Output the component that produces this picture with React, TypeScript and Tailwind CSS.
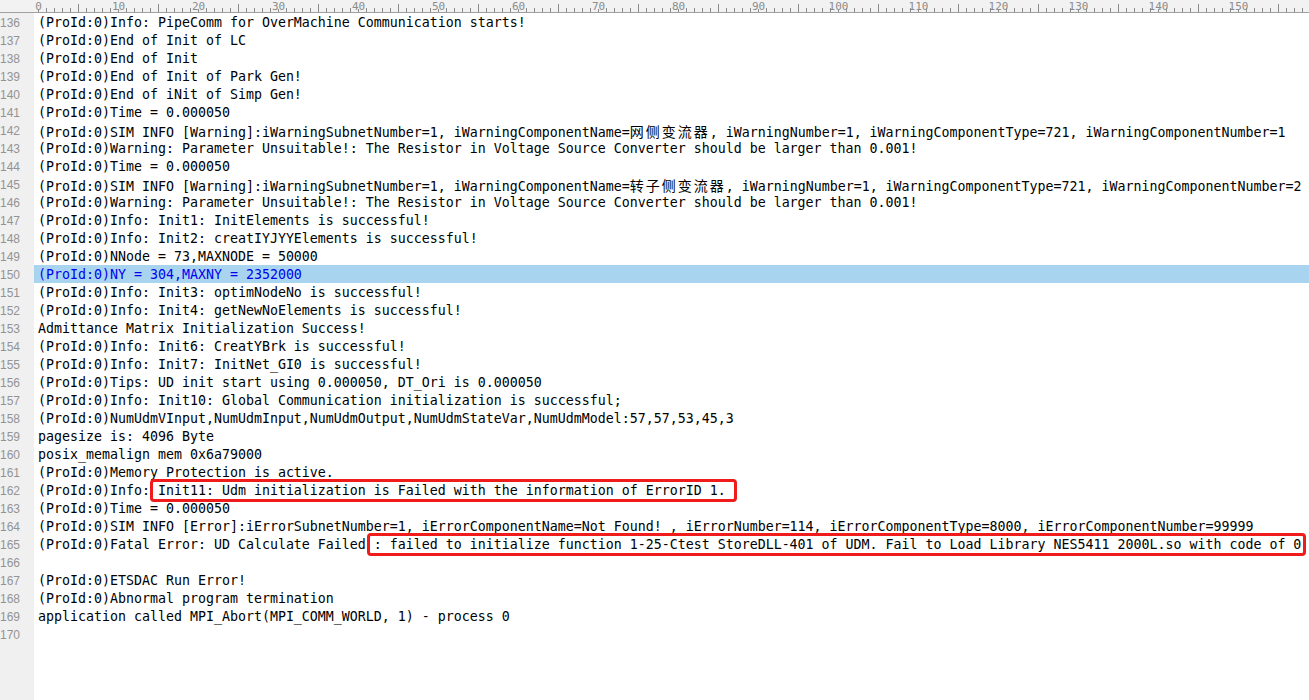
const mono = "font-['DejaVu_Sans_Mono','Liberation_Mono',monospace]";
const cjk = "font-['Noto_Sans_CJK_SC',sans-serif] text-[14px] tracking-[2px]";

function Cn({ children }: { children: string }) {
  return <span className={cjk}>{children}</span>;
}

const lines: React.ReactNode[] = [
  "(ProId:0)Info: PipeComm for OverMachine Communication starts!",
  "(ProId:0)End of Init of LC",
  "(ProId:0)End of Init",
  "(ProId:0)End of Init of Park Gen!",
  "(ProId:0)End of iNit of Simp Gen!",
  "(ProId:0)Time = 0.000050",
  <>
    (ProId:0)SIM INFO [Warning]:iWarningSubnetNumber=1, iWarningComponentName=<Cn>网侧变流器</Cn>, iWarningNumber=1,
    iWarningComponentType=721, iWarningComponentNumber=1
  </>,
  "(ProId:0)Warning: Parameter Unsuitable!: The Resistor in Voltage Source Converter should be larger than 0.001!",
  "(ProId:0)Time = 0.000050",
  <>
    (ProId:0)SIM INFO [Warning]:iWarningSubnetNumber=1, iWarningComponentName=<Cn>转子侧变流器</Cn>, iWarningNumber=1,
    iWarningComponentType=721, iWarningComponentNumber=2
  </>,
  "(ProId:0)Warning: Parameter Unsuitable!: The Resistor in Voltage Source Converter should be larger than 0.001!",
  "(ProId:0)Info: Init1: InitElements is successful!",
  "(ProId:0)Info: Init2: creatIYJYYElements is successful!",
  "(ProId:0)NNode = 73,MAXNODE = 50000",
  "(ProId:0)NY = 304,MAXNY = 2352000",
  "(ProId:0)Info: Init3: optimNodeNo is successful!",
  "(ProId:0)Info: Init4: getNewNoElements is successful!",
  "Admittance Matrix Initialization Success!",
  "(ProId:0)Info: Init6: CreatYBrk is successful!",
  "(ProId:0)Info: Init7: InitNet_GI0 is successful!",
  "(ProId:0)Tips: UD init start using 0.000050, DT_Ori is 0.000050",
  "(ProId:0)Info: Init10: Global Communication initialization is successful;",
  "(ProId:0)NumUdmVInput,NumUdmInput,NumUdmOutput,NumUdmStateVar,NumUdmModel:57,57,53,45,3",
  "pagesize is: 4096 Byte",
  "posix_memalign mem 0x6a79000",
  "(ProId:0)Memory Protection is active.",
  "(ProId:0)Info: Init11: Udm initialization is Failed with the information of ErrorID 1.",
  "(ProId:0)Time = 0.000050",
  "(ProId:0)SIM INFO [Error]:iErrorSubnetNumber=1, iErrorComponentName=Not Found! , iErrorNumber=114, iErrorComponentType=8000, iErrorComponentNumber=99999",
  "(ProId:0)Fatal Error: UD Calculate Failed : failed to initialize function 1-25-Ctest StoreDLL-401 of UDM. Fail to Load Library NES5411 2000L.so with code of 0",
  "",
  "(ProId:0)ETSDAC Run Error!",
  "(ProId:0)Abnormal program termination",
  "application called MPI_Abort(MPI_COMM_WORLD, 1) - process 0",
  "",
];

function Ruler() {
  const ticks = [];
  for (let k = 0; k < 160; k++) {
    const x = 38 + k * 8 + 0.5;
    if (k % 10 === 0) {
      ticks.push(
        <g key={k}>
          <line x1={x} y1={9} x2={x} y2={12} stroke="#8c8c8c" />
          <text x={x} y={10} textAnchor="middle" fontSize="11" fill="#8c8c8c" fontFamily="DejaVu Sans Mono, monospace">
            {k}
          </text>
        </g>
      );
    } else {
      const y1 = k % 5 === 0 ? 4 : 8;
      ticks.push(<line key={k} x1={x} y1={y1} x2={x} y2={12} stroke="#8c8c8c" />);
    }
  }
  return (
    <svg width="1309" height="13" className="block shrink-0 bg-[#f2f2f2]">
      {ticks}
      <line x1="0" y1="12.5" x2="1309" y2="12.5" stroke="#a0a0a0" />
    </svg>
  );
}

export default function App() {
  return (
    <div className="w-[1309px] h-[700px] overflow-hidden bg-white flex flex-col">
      <Ruler />
      <div className="flex flex-1 min-h-0">
        <div className="w-[34px] shrink-0 bg-[#f0f0f0] font-['Liberation_Sans',sans-serif] text-[12px] text-[#939393]">
          {lines.map((_, i) => (
            <div key={i} className="h-[18px] leading-[20px] text-right pr-[14px]">
              {136 + i}
            </div>
          ))}
        </div>
        <div className={`relative flex-1 min-w-0 overflow-hidden ${mono} text-[13.29px] text-black`}>
          {lines.map((l, i) => (
            <div
              key={i}
              className={`h-[18px] leading-[20px] whitespace-pre pl-[4px] ${i === 14 ? "bg-[#a8d4f0] text-[#0000f0]" : ""}`}
            >
              {l}
            </div>
          ))}
          <div className="absolute left-[116px] top-[466px] w-[587px] h-[23px] border-[3px] border-[#f01b1b] rounded-[4px]" />
          <div className="absolute left-[333px] top-[520px] w-[939px] h-[23px] border-[3px] border-[#f01b1b] rounded-[4px]" />
        </div>
      </div>
    </div>
  );
}
